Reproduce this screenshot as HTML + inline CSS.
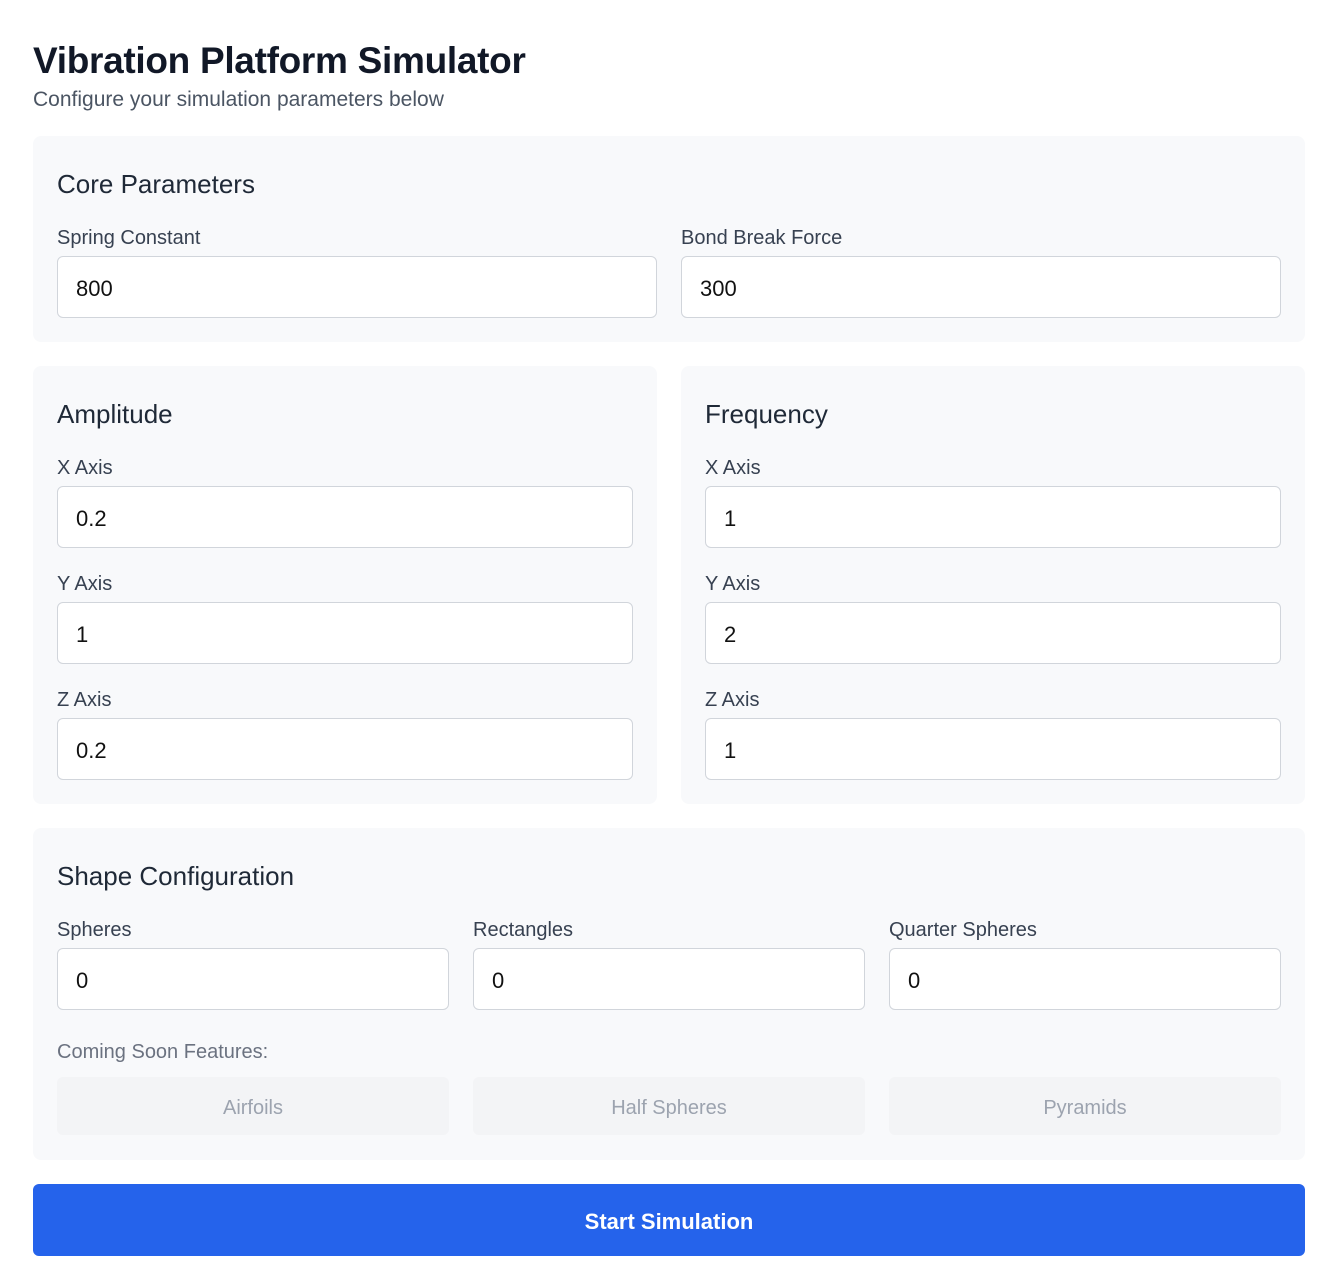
<!DOCTYPE html>
<html><head><meta charset="utf-8"><style>
*{box-sizing:border-box;margin:0;padding:0}
body{width:1330px;height:1275px;background:#fff;font-family:"Liberation Sans",sans-serif;position:relative;color:#111827}
.a{position:absolute}
.card{position:absolute;background:#f8f9fb;border-radius:8px}
.h{position:absolute;font-size:26px;color:#1f2937;line-height:30px}
.l{position:absolute;font-size:20px;color:#374151;line-height:24px}
.in{position:absolute;height:62px;background:#fff;border:1px solid #d1d5db;border-radius:6px;font-size:22px;line-height:64px;padding-left:18px;color:#111}
.cs{position:absolute;top:1077px;height:58px;width:392px;background:#f3f4f6;border-radius:6px;text-align:center;line-height:62px;font-size:20px;color:#9ca3af}
</style></head><body>
<div class="a" style="left:33px;top:40px;font-size:37px;font-weight:bold;line-height:42px;letter-spacing:-0.3px">Vibration Platform Simulator</div>
<div class="a" style="left:33px;top:88px;font-size:21px;color:#4b5563;line-height:24px">Configure your simulation parameters below</div>

<div class="card" style="left:33px;top:136px;width:1272px;height:206px"></div>
<div class="h" style="left:57px;top:169px">Core Parameters</div>
<div class="l" style="left:57px;top:226px">Spring Constant</div>
<div class="in" style="left:57px;top:256px;width:600px">800</div>
<div class="l" style="left:681px;top:226px">Bond Break Force</div>
<div class="in" style="left:681px;top:256px;width:600px">300</div>

<div class="card" style="left:33px;top:366px;width:624px;height:438px"></div>
<div class="h" style="left:57px;top:399px">Amplitude</div>
<div class="l" style="left:57px;top:456px">X Axis</div>
<div class="in" style="left:57px;top:486px;width:576px">0.2</div>
<div class="l" style="left:57px;top:572px">Y Axis</div>
<div class="in" style="left:57px;top:602px;width:576px">1</div>
<div class="l" style="left:57px;top:688px">Z Axis</div>
<div class="in" style="left:57px;top:718px;width:576px">0.2</div>

<div class="card" style="left:681px;top:366px;width:624px;height:438px"></div>
<div class="h" style="left:705px;top:399px">Frequency</div>
<div class="l" style="left:705px;top:456px">X Axis</div>
<div class="in" style="left:705px;top:486px;width:576px">1</div>
<div class="l" style="left:705px;top:572px">Y Axis</div>
<div class="in" style="left:705px;top:602px;width:576px">2</div>
<div class="l" style="left:705px;top:688px">Z Axis</div>
<div class="in" style="left:705px;top:718px;width:576px">1</div>

<div class="card" style="left:33px;top:828px;width:1272px;height:332px"></div>
<div class="h" style="left:57px;top:861px">Shape Configuration</div>
<div class="l" style="left:57px;top:918px">Spheres</div>
<div class="in" style="left:57px;top:948px;width:392px">0</div>
<div class="l" style="left:473px;top:918px">Rectangles</div>
<div class="in" style="left:473px;top:948px;width:392px">0</div>
<div class="l" style="left:889px;top:918px">Quarter Spheres</div>
<div class="in" style="left:889px;top:948px;width:392px">0</div>
<div class="l" style="left:57px;top:1040px;color:#6b7280">Coming Soon Features:</div>
<div class="cs" style="left:57px">Airfoils</div>
<div class="cs" style="left:473px">Half Spheres</div>
<div class="cs" style="left:889px">Pyramids</div>

<div class="a" style="left:33px;top:1184px;width:1272px;height:72px;background:#2563eb;border-radius:6px;color:#fff;font-weight:bold;font-size:22px;text-align:center;line-height:76px">Start Simulation</div>
</body></html>
